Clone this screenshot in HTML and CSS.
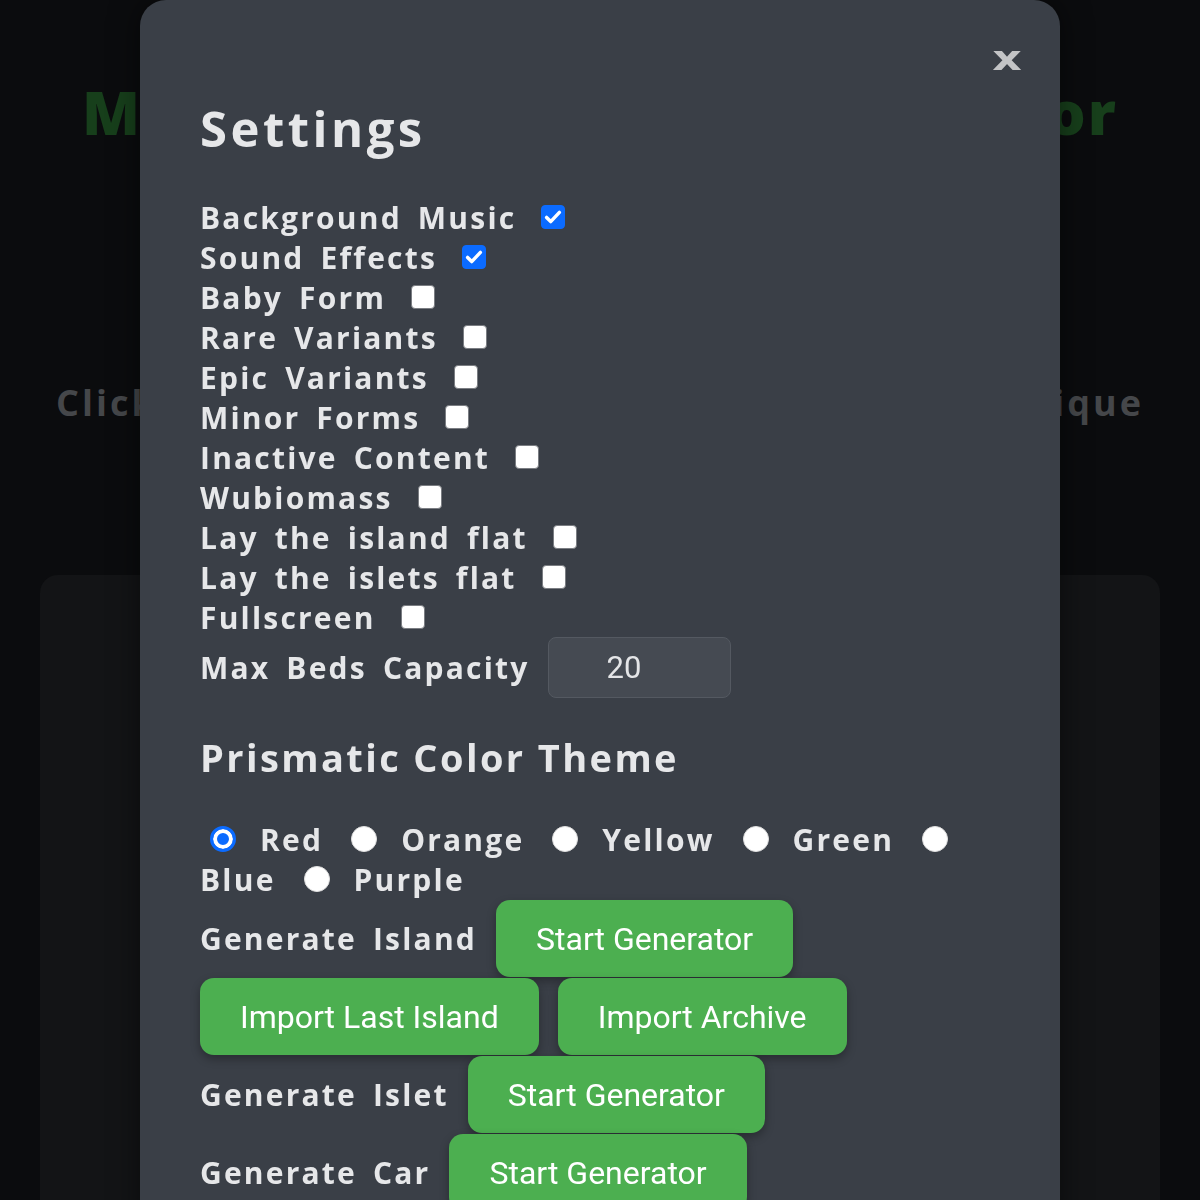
FILE: index.html
```html
<!DOCTYPE html>
<html lang="en">
<head>
<meta charset="utf-8">
<title>Island Generator</title>
<link rel="stylesheet" href="styles.css">
</head>
<body>
<main class="page">
  <h1 class="page-title">My Singing Monsters Generator</h1>
  <p class="page-lead">Click the button below to generate your own unique</p>
  <section class="stage"></section>
</main>

<div class="overlay">
  <div class="modal">
    <button class="close" type="button" aria-label="Close">x</button>
    <h2 class="modal-title">Settings</h2>

    <div class="options">
      <label class="opt"><span>Background Music</span><input type="checkbox" checked></label>
      <label class="opt"><span>Sound Effects</span><input type="checkbox" checked></label>
      <label class="opt"><span>Baby Form</span><input type="checkbox"></label>
      <label class="opt"><span>Rare Variants</span><input type="checkbox"></label>
      <label class="opt"><span>Epic Variants</span><input type="checkbox"></label>
      <label class="opt"><span>Minor Forms</span><input type="checkbox"></label>
      <label class="opt"><span>Inactive Content</span><input type="checkbox"></label>
      <label class="opt"><span>Wubiomass</span><input type="checkbox"></label>
      <label class="opt"><span>Lay the island flat</span><input type="checkbox"></label>
      <label class="opt"><span>Lay the islets flat</span><input type="checkbox"></label>
      <label class="opt"><span>Fullscreen</span><input type="checkbox"></label>
      <label class="opt opt-number"><span>Max Beds Capacity</span><input class="num" type="text" value="20"></label>
    </div>

    <h3 class="section-title">Prismatic Color Theme</h3>

    <div class="themes">
      <input class="swatch" type="radio" name="theme" id="t-red" checked><label class="theme" for="t-red">Red</label>
      <input class="swatch" type="radio" name="theme" id="t-orange"><label class="theme" for="t-orange">Orange</label>
      <input class="swatch" type="radio" name="theme" id="t-yellow"><label class="theme" for="t-yellow">Yellow</label>
      <input class="swatch" type="radio" name="theme" id="t-green"><label class="theme" for="t-green">Green</label>
      <input class="swatch" type="radio" name="theme" id="t-blue"><label class="theme" for="t-blue">Blue</label>
      <input class="swatch" type="radio" name="theme" id="t-purple"><label class="theme" for="t-purple">Purple</label>
    </div>

    <div class="actions">
      <div class="act-row"><span class="act-label">Generate Island</span><button class="btn" type="button">Start Generator</button></div>
      <div class="act-row"><button class="btn" type="button">Import Last Island</button><button class="btn" type="button">Import Archive</button></div>
      <div class="act-row"><span class="act-label">Generate Islet</span><button class="btn" type="button">Start Generator</button></div>
      <div class="act-row"><span class="act-label">Generate Car</span><button class="btn" type="button">Start Generator</button></div>
    </div>
  </div>
</div>
</body>
</html>
```

FILE: styles.css
```css
html, body {
  margin: 0;
  height: 100%;
  overflow: hidden;
}

body {
  background: #0b0c0e;
  font-family: "Open Sans", "DejaVu Sans", sans-serif;
  color: #e6e7e9;
}

/* page underneath the dialog */
.page {
  display: flex;
  flex-direction: column;
  align-items: center;
  padding-top: 74px;
}

.page-title {
  margin: 0;
  font-size: 60px;
  line-height: 76px;
  font-weight: 800;
  color: #173f1b;
  letter-spacing: 2px;
  white-space: nowrap;
}

.page-lead {
  margin: 230px 0 0;
  font-size: 36px;
  line-height: 46px;
  font-weight: 700;
  color: #45474a;
  letter-spacing: 3px;
  white-space: nowrap;
}

.stage {
  align-self: stretch;
  margin: 149px 40px 0;
  height: 700px;
  background: #131416;
  border-radius: 18px;
}

/* settings dialog */
.overlay {
  position: fixed;
  inset: 0;
  display: flex;
  justify-content: center;
}

.modal {
  position: relative;
  width: 920px;
  height: 1240px;
  box-sizing: border-box;
  padding: 92px 60px 0;
  background: #3a3f47;
  border-radius: 26px;
  box-shadow: 0 0 30px rgba(0, 0, 0, 0.5);
}

.close {
  position: absolute;
  top: 38px;
  right: 42px;
  padding: 0;
  border: 0;
  background: none;
  font-family: "DejaVu Sans", sans-serif;
  font-weight: 700;
  font-size: 34px;
  line-height: 40px;
  color: #c3c4c6;
  transform: scaleX(1.35);
  cursor: pointer;
}

.modal-title {
  margin: 0 0 33px;
  font-size: 49px;
  line-height: 72px;
  font-weight: 700;
  letter-spacing: 3.5px;
  color: #e6e7e9;
}

.options {
  display: flex;
  flex-direction: column;
  align-items: flex-start;
}

.opt,
.theme,
.act-label {
  font-size: 30px;
  font-weight: 700;
  letter-spacing: 2.2px;
  word-spacing: 6px;
}

.opt {
  display: flex;
  align-items: center;
  gap: 25px;
  height: 40px;
}

.opt input[type="checkbox"] {
  appearance: none;
  margin: 0;
  width: 24px;
  height: 24px;
  box-sizing: border-box;
  border: 1.5px solid #7a7d82;
  border-radius: 4px;
  background: #fff;
}

.opt input[type="checkbox"]:checked {
  border-color: #0b6bff;
  background: #0b6bff url("data:image/svg+xml;utf8,<svg xmlns='http://www.w3.org/2000/svg' viewBox='0 0 24 24'><path d='M5 12.5l4.5 4.5L19 7' fill='none' stroke='white' stroke-width='3.8' stroke-linecap='round' stroke-linejoin='round'/></svg>") center / 22px no-repeat;
}

.opt-number {
  height: 60px;
  gap: 18px;
}

.num {
  width: 183px;
  height: 61px;
  box-sizing: border-box;
  padding: 0 0 0 58px;
  border: 1.5px solid #545961;
  border-radius: 8px;
  background: #454a52;
  color: #e4e5e7;
  font-family: Roboto, sans-serif;
  font-size: 31px;
  letter-spacing: 0;
  outline: none;
}

.section-title {
  margin: 36px 0 0;
  font-size: 38px;
  line-height: 48px;
  font-weight: 700;
  letter-spacing: 2.4px;
}

.themes {
  display: flex;
  flex-wrap: wrap;
  align-items: center;
  width: 800px;
  margin-top: 38px;
}

.theme {
  display: flex;
  align-items: center;
  height: 40px;
  margin: 0 28px 0 24px;
  cursor: pointer;
}

.themes > .theme:nth-of-type(5) {
  margin-left: 0;
}

.swatch {
  appearance: none;
  margin: 0;
  width: 26px;
  height: 26px;
  box-sizing: border-box;
  border-radius: 50%;
  background: #fff;
  border: 1px solid #e0e0e0;
}

.swatch:first-child {
  margin-left: 10px;
}

.swatch:checked {
  border: 3px solid #0b6bff;
  background: #0b6bff;
  box-shadow: inset 0 0 0 4px #fff;
}

.actions {
  display: flex;
  flex-direction: column;
  align-items: flex-start;
}

.act-row {
  display: flex;
  align-items: center;
  gap: 19px;
  margin-top: 1px;
}

.btn {
  height: 77px;
  padding: 0 40px;
  border: 0;
  border-radius: 14px;
  background: #4caf50;
  color: #fff;
  font-family: Roboto, sans-serif;
  font-size: 32px;
  box-shadow: 0 4px 10px rgba(0, 0, 0, 0.3);
  cursor: pointer;
}
```
